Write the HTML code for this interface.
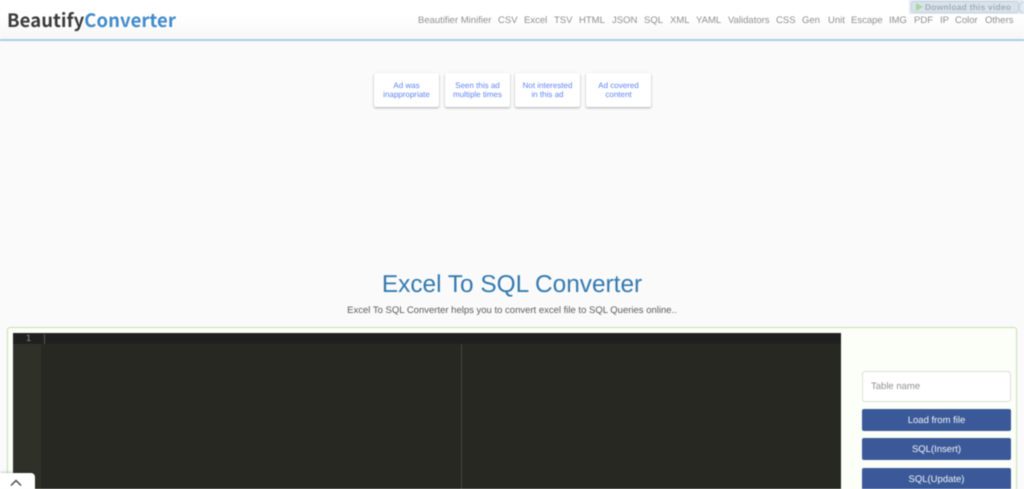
<!DOCTYPE html>
<html lang="en">
<head>
<meta charset="utf-8">
<title>Excel To SQL Converter</title>
<style>
html,body{margin:0;padding:0;width:1024px;height:489px;overflow:hidden;background:#fafafa;font-family:"Liberation Sans",sans-serif;text-rendering:geometricPrecision}
#root{position:relative;width:1024px;height:489px;overflow:hidden;background:#fafafa;filter:blur(.45px)}
.abs{position:absolute}
#hdr{left:0;top:0;width:1024px;height:39px;background:linear-gradient(#fff 0,#fff 40%,#f7f7f7 100%);border-bottom:2px solid #a9cde6}
#logo{left:7px;top:6px;font:700 18.45px/28px "Noto Sans CJK JP","DejaVu Sans",sans-serif;color:#3b3b3b;white-space:nowrap;letter-spacing:.1px}
#logo span{color:#428bca}
.n{position:absolute;top:14px;font-size:9.5px;line-height:13px;color:#8f8f8f;white-space:nowrap}
#dl{left:909px;top:0;width:115px;height:14px;background:#e4e9f1}
#dlb{left:911px;top:1px;width:106px;height:10px;background:#d9e2ea;border:1px solid #c3d2df;border-radius:3px;font:700 8.4px/10px "Liberation Sans",sans-serif;color:#a3aeb8;white-space:nowrap;letter-spacing:.25px}
#dlb i{display:inline-block;width:0;height:0;border-left:7px solid #a8d8a0;border-top:4px solid transparent;border-bottom:4px solid transparent;margin:0 2px 0 4px;vertical-align:-1px}
#ring{left:1019px;top:2px;width:7px;height:9px;border:1px solid #c3d2df;border-radius:4px}
.ad{position:absolute;top:73px;width:65px;height:34px;background:#fff;border-radius:2px;box-shadow:0 1px 2px rgba(0,0,0,.32);color:#5f84f5;font-size:8px;line-height:9.5px;text-align:center;display:flex;align-items:center;justify-content:center}
h1{position:absolute;left:0;top:270px;width:1024px;margin:0;text-align:center;font-weight:400;font-size:24.4px;line-height:29px;color:#337ab0}
#sub{left:0;top:304px;width:1024px;text-align:center;font-size:9.5px;line-height:13px;color:#5c5c5c}
#panel{left:7px;top:327px;width:1008px;height:170px;background:#fcfff7;border:1px solid #c4e0b2;border-radius:3px}
#ed{left:13px;top:333px;width:828px;height:156px;background:#272822}
#gut{left:13px;top:333px;width:28px;height:156px;background:#2f3129}
#act{left:13px;top:333px;width:828px;height:11px;background:#202020}
#num{left:13px;top:334px;width:18px;height:11px;text-align:right;font:8.5px/11px "DejaVu Sans Mono","Liberation Mono",monospace;color:#8f908a}
#cur{left:44px;top:334px;width:1px;height:10px;background:#55554f}
#mar{left:461px;top:344px;width:1px;height:145px;background:#43443d}
#inp{left:862px;top:371px;width:147px;height:29px;background:#fff;border:1px solid #dcdfd8;border-radius:3px;font-size:9.5px;line-height:29px;color:#8f8f8f;text-indent:8px}
.b{position:absolute;left:862px;width:149px;height:22px;background:#3b5998;border-radius:2px;color:#f2f4fa;font-size:9.5px;line-height:23px;text-align:center}
#tab{left:0;top:473px;width:35px;height:16px;background:#fff;border-radius:0 4px 0 0;box-shadow:0 0 3px rgba(0,0,0,.35)}
</style>
</head>
<body>
<div id="root">
<div class="abs" id="hdr"></div>
<div class="abs" id="logo">Beautify<span>Converter</span></div>
<span class="n" style="left:418px">Beautifier Minifier</span>
<span class="n" style="left:498px">CSV</span>
<span class="n" style="left:524px">Excel</span>
<span class="n" style="left:554px">TSV</span>
<span class="n" style="left:579px">HTML</span>
<span class="n" style="left:612px">JSON</span>
<span class="n" style="left:644px">SQL</span>
<span class="n" style="left:670px">XML</span>
<span class="n" style="left:696px">YAML</span>
<span class="n" style="left:728px">Validators</span>
<span class="n" style="left:776px">CSS</span>
<span class="n" style="left:802px">Gen</span>
<span class="n" style="left:828px">Unit</span>
<span class="n" style="left:851px">Escape</span>
<span class="n" style="left:889px">IMG</span>
<span class="n" style="left:914px">PDF</span>
<span class="n" style="left:940px">IP</span>
<span class="n" style="left:955px">Color</span>
<span class="n" style="left:985px">Others</span>
<div class="abs" id="dl"></div>
<div class="abs" id="dlb"><i></i>Download this video</div>
<div class="abs" id="ring"></div>
<div class="ad" style="left:374px">Ad was<br>inappropriate</div>
<div class="ad" style="left:445px">Seen this ad<br>multiple times</div>
<div class="ad" style="left:515px">Not interested<br>in this ad</div>
<div class="ad" style="left:586px">Ad covered<br>content</div>
<h1>Excel To SQL Converter</h1>
<div class="abs" id="sub">Excel To SQL Converter helps you to convert excel file to SQL Queries online..</div>
<div class="abs" id="panel"></div>
<div class="abs" id="ed"></div>
<div class="abs" id="gut"></div>
<div class="abs" id="act"></div>
<div class="abs" id="num">1</div>
<div class="abs" id="cur"></div>
<div class="abs" id="mar"></div>
<div class="abs" id="inp">Table name</div>
<div class="b" style="top:409px">Load from file</div>
<div class="b" style="top:438px">SQL(Insert)</div>
<div class="b" style="top:468px">SQL(Update)</div>
<div class="abs" id="tab">
<svg width="35" height="16" style="display:block"><path d="M11 12.5 L16 7.5 L21 12.5" fill="none" stroke="#444" stroke-width="1.4"/></svg>
</div>
</div>
</body>
</html>
